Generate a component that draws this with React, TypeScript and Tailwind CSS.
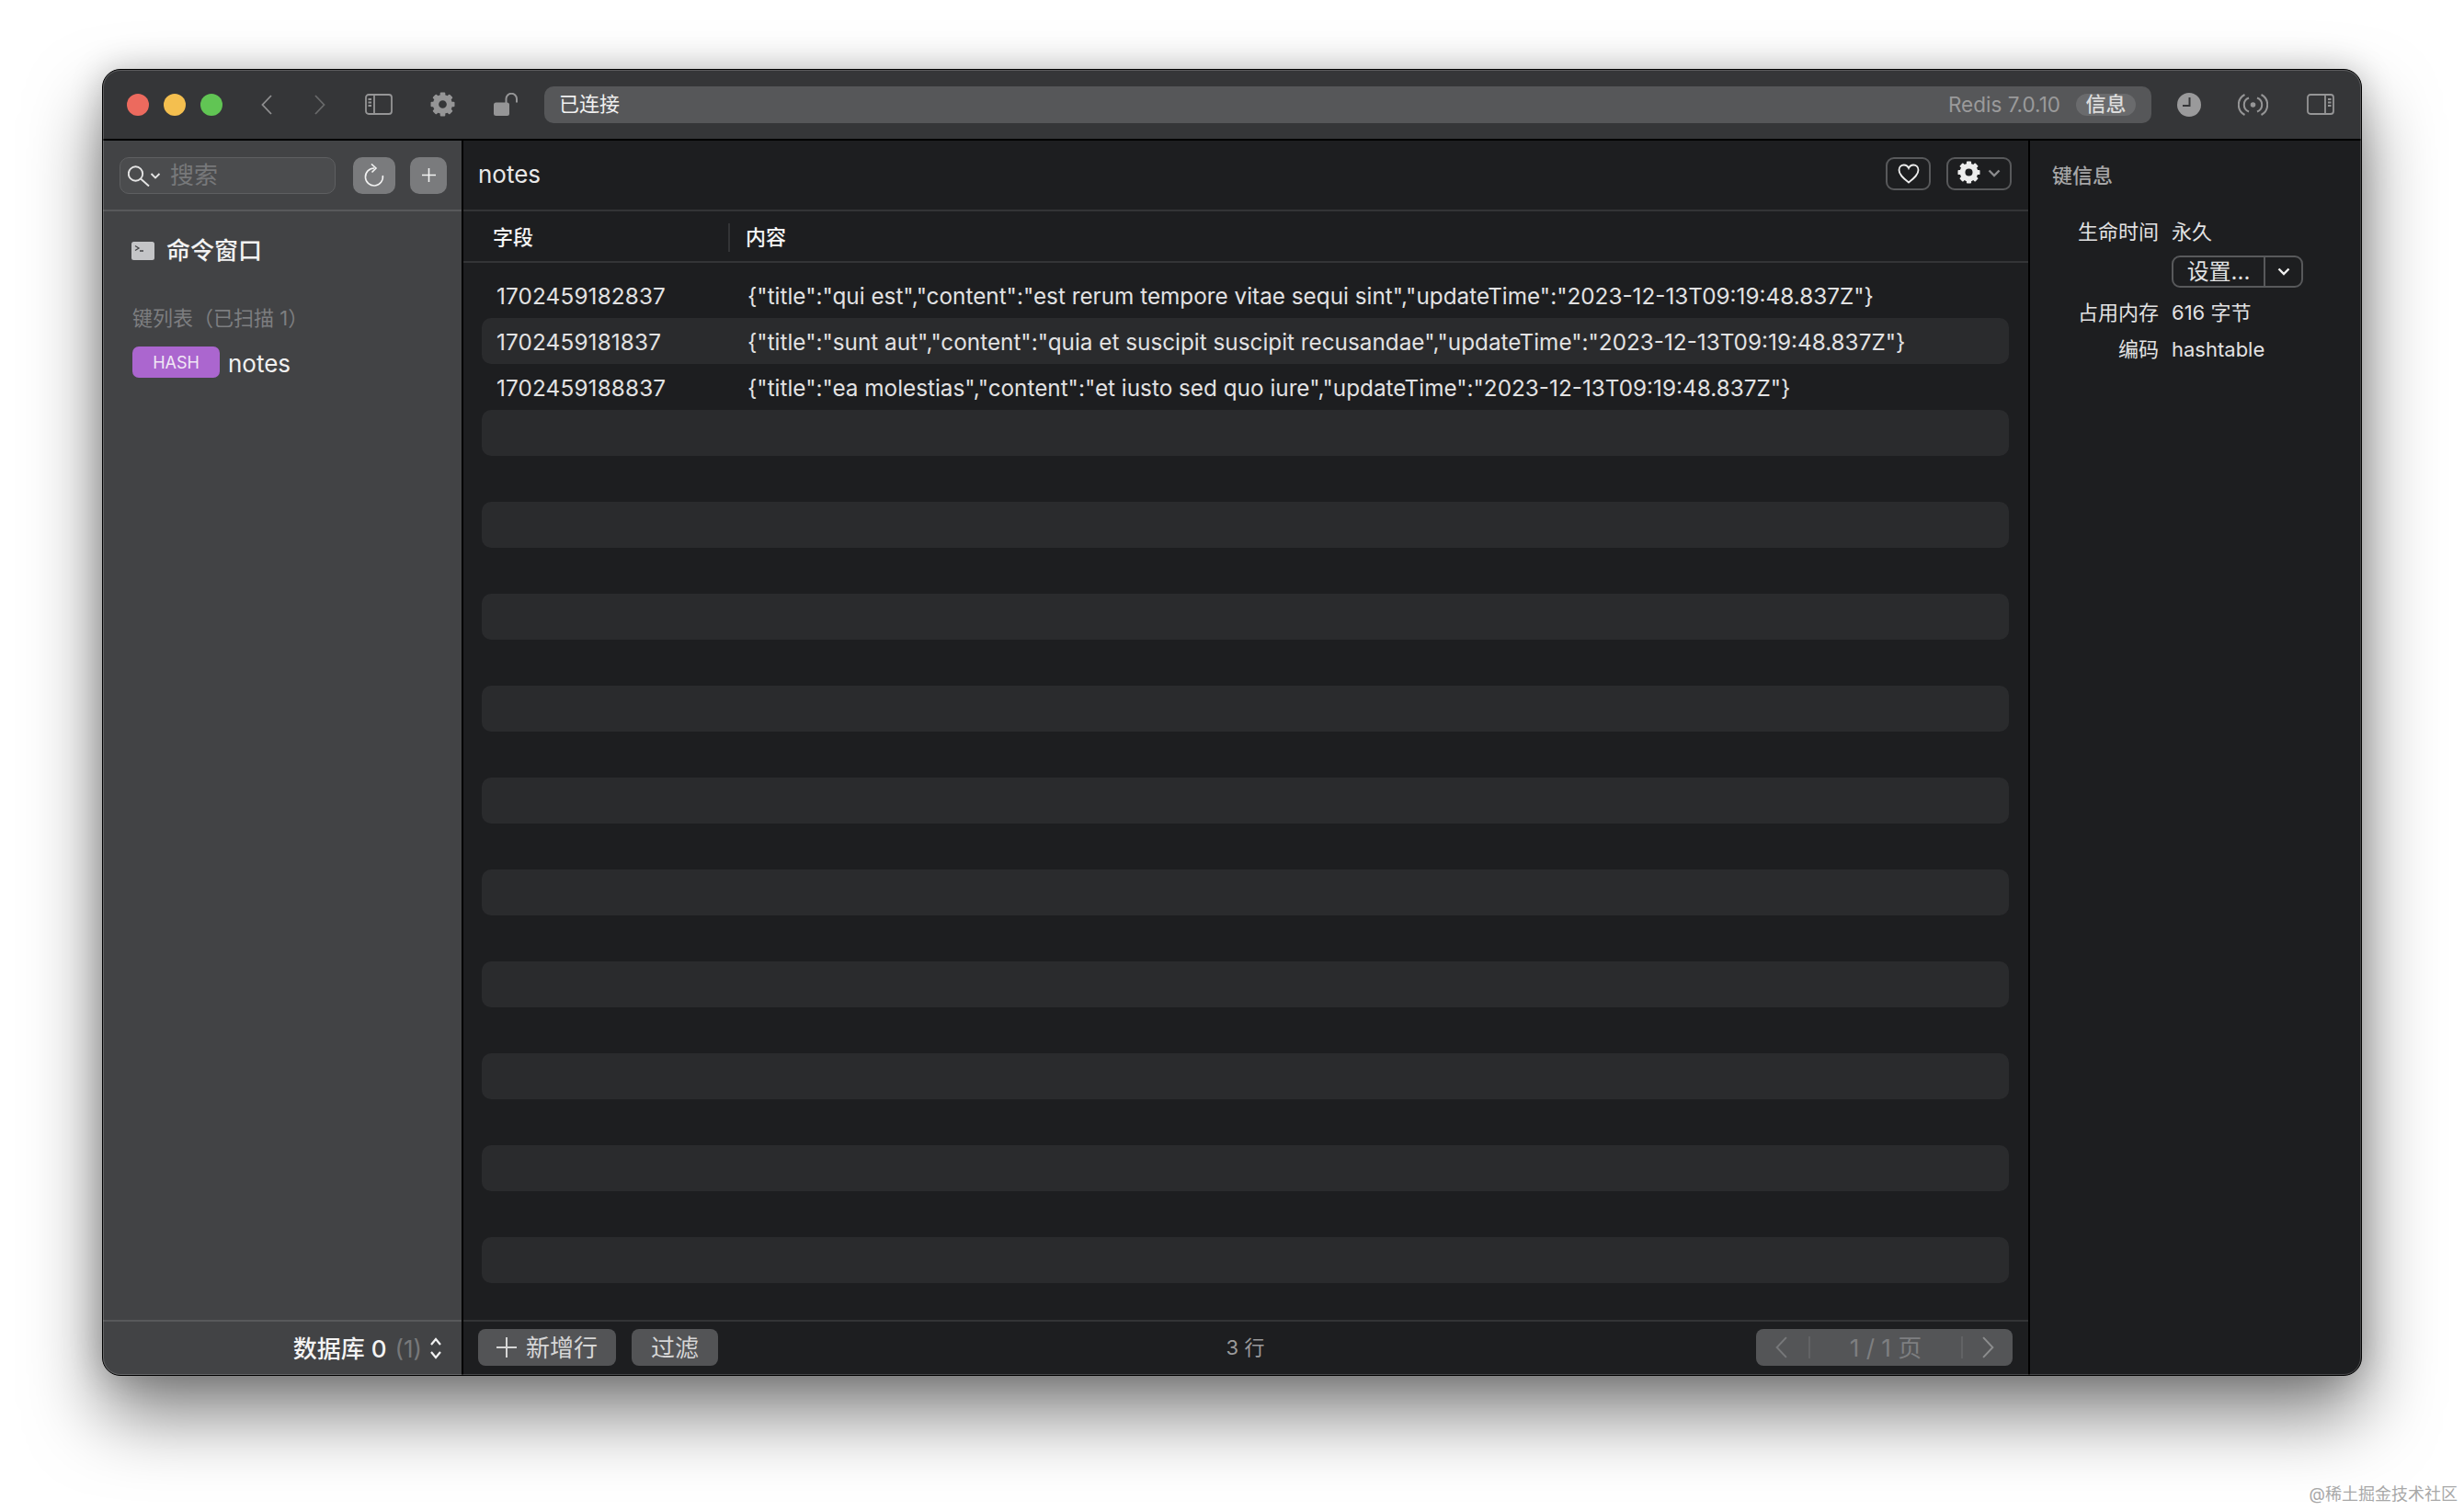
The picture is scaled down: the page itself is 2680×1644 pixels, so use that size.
const rows = [
	{
		field: '1702459182837',
		value: '{"title":"qui est","content":"est rerum tempore vitae sequi sint","updateTime":"2023-12-13T09:19:48.837Z"}'
	},
	{
		field: '1702459181837',
		value: '{"title":"sunt aut","content":"quia et suscipit suscipit recusandae","updateTime":"2023-12-13T09:19:48.837Z"}'
	},
	{
		field: '1702459188837',
		value: '{"title":"ea molestias","content":"et iusto sed quo iure","updateTime":"2023-12-13T09:19:48.837Z"}'
	}
];

const emptyRows = Array.from({ length: 19 }, (_, i) => i);
const gearTeeth = [0, 45, 90, 135, 180, 225, 270, 315];

const Chevron = ({ dir, className }: { dir: 'left' | 'right'; className: string }) => (
	<svg viewBox="0 0 12 22" fill="none" stroke="currentColor" strokeWidth="1.8" className={className}>
		<path d={dir === 'left' ? 'M11 1 L1.5 11 L11 21' : 'M1 1 L10.5 11 L1 21'} />
	</svg>
);

const ChevronDown = ({ className }: { className: string }) => (
	<svg viewBox="0 0 14 9" fill="none" stroke="currentColor" strokeWidth="2.4" className={className}>
		<path d="M1.5 1.5 L7 7 L12.5 1.5" />
	</svg>
);

const PanelIcon = ({ right }: { right?: boolean }) => (
	<svg viewBox="0 0 30 23" fill="none" stroke="currentColor" strokeWidth="1.8" className="w-[30px] h-[23px] flex-none text-[#959596]">
		<rect x="1" y="1" width="28" height="21" rx="3" />
		{right ? (
			<path d="M20 1 V22 M23 6 H26.5 M23 9.5 H26.5 M23 13 H26.5" />
		) : (
			<path d="M10 1 V22 M3.5 6 H7 M3.5 9.5 H7 M3.5 13 H7" />
		)}
	</svg>
);

const Gear = ({ className }: { className: string }) => (
	<svg viewBox="0 0 26 26" className={className}>
		<circle cx="13" cy="13" r="7.2" fill="none" stroke="currentColor" strokeWidth="6" />
		{gearTeeth.map((deg) => (
			<rect key={deg} x="10.3" y="0.5" width="5.4" height="6" rx="1" fill="currentColor" transform={`rotate(${deg} 13 13)`} />
		))}
	</svg>
);

export default function App() {
	return (
		<div className="relative w-[2680px] h-[1644px] overflow-hidden bg-white pl-[111px] pt-[75px] font-['Inter','Noto_Sans_CJK_SC',sans-serif]">
			<div className="relative w-[2458px] h-[1422px] flex flex-col rounded-[20px] border border-black bg-[#1d1e20] shadow-[0_42px_80px_rgba(0,0,0,0.5),0_0_36px_rgba(0,0,0,0.2)]">
				{/* title bar */}
				<div className="h-[77px] flex-none flex items-center pl-[26px] bg-[#353638] border-b-2 border-black rounded-t-[19px]">
					<div className="flex gap-4">
						<div className="w-6 h-6 rounded-full bg-[#ec6a5e]" />
						<div className="w-6 h-6 rounded-full bg-[#f4bf4f]" />
						<div className="w-6 h-6 rounded-full bg-[#61c554]" />
					</div>
					<Chevron dir="left" className="ml-[42px] w-[12px] h-[22px] flex-none text-[#8f8f90]" />
					<Chevron dir="right" className="ml-[46px] w-[12px] h-[22px] flex-none text-[#68696a]" />
					<div className="ml-[43px] flex">
						<PanelIcon />
					</div>
					<Gear className="ml-[41px] w-[27px] h-[27px] flex-none text-[#959596]" />
					<svg viewBox="0 0 26 25" className="ml-[42px] w-[26px] h-[25px] flex-none text-[#959596]">
						<rect x="0" y="10.5" width="17" height="14.5" rx="2.5" fill="currentColor" />
						<path d="M13.5 11 V6.5 A5.5 5.5 0 0 1 25 6.5 V10.5" fill="none" stroke="currentColor" strokeWidth="2" />
					</svg>
					<div className="ml-[29px] w-[1748px] h-10 flex-none flex items-center justify-between rounded-[10px] bg-[#565759] pl-4 pr-[17px]">
						<span className="text-[22px] text-[#f0f0f0]">已连接</span>
						<div className="flex items-center gap-[17px]">
							<span className="text-[22.5px] text-[#9a9a9b]">Redis 7.0.10</span>
							<span className="h-6 w-[65px] flex items-center justify-center rounded-full bg-[#6a6b6d] text-[22px] font-medium text-[#dcdcdc]">
								信息
							</span>
						</div>
					</div>
					<svg viewBox="0 0 26 26" className="ml-[28px] w-[26px] h-[26px] flex-none">
						<circle cx="13" cy="13" r="13" fill="#9a9a9b" />
						<path d="M13.5 5 V14 H6" fill="none" stroke="#353638" strokeWidth="2" />
					</svg>
					<svg viewBox="0 0 33 24" fill="none" stroke="#959596" strokeWidth="2" className="ml-[40px] w-[33px] h-[24px] flex-none">
						<circle cx="16.5" cy="12" r="2.8" fill="#959596" stroke="none" />
						<path d="M12 4.5 A8 8 0 0 0 12 19.5 M21 4.5 A8 8 0 0 1 21 19.5" />
						<path d="M7.5 1 A12.4 12.4 0 0 0 7.5 23 M25.5 1 A12.4 12.4 0 0 1 25.5 23" />
					</svg>
					<div className="ml-[42px] flex">
						<PanelIcon right />
					</div>
				</div>

				<div className="flex flex-1 min-h-0">
					{/* sidebar */}
					<div className="w-[392px] flex-none flex flex-col bg-[#424345] border-r-2 border-black rounded-bl-[19px]">
						<div className="h-[77px] flex-none flex items-center pl-[18px] border-b-2 border-[#58595b]">
							<div className="w-[235px] h-10 flex items-center pl-2 rounded-[10px] border border-[#5e5f61] bg-[#4b4c4e]">
								<svg viewBox="0 0 36 24" fill="none" stroke="#e4e4e4" strokeWidth="1.9" className="w-[36px] h-[24px] flex-none">
									<circle cx="8.5" cy="10" r="7.7" />
									<path d="M14 15.5 L23 23.5" />
									<path d="M25.5 10 L30 14.5 L34.5 10" />
								</svg>
								<span className="ml-[10px] text-[26px] leading-none text-[#77787a]">搜索</span>
							</div>
							<div className="ml-[19px] w-[46px] h-10 flex items-center justify-center rounded-[10px] bg-[#7a7b7d]">
								<svg viewBox="0 0 22 26" fill="none" stroke="#f2f2f2" strokeWidth="1.6" className="w-[22px] h-[26px]">
									<path d="M20.3 13 A9.5 9.5 0 1 1 11 5" />
									<path d="M8 0.5 L13 5 L8.5 9.5" />
								</svg>
							</div>
							<div className="ml-4 w-10 h-10 flex items-center justify-center rounded-[10px] bg-[#7a7b7d]">
								<svg viewBox="0 0 15 15" stroke="#f2f2f2" strokeWidth="1.6" className="w-[15px] h-[15px]">
									<path d="M7.5 0 V15 M0 7.5 H15" />
								</svg>
							</div>
						</div>
						<div className="flex-1 min-h-0 pl-[32px] pt-[23px]">
							<div className="h-10 flex items-center -ml-px">
								<svg viewBox="0 0 25 20" className="w-[25px] h-[20px] flex-none">
									<rect width="25" height="20" rx="2.5" fill="#c4c5c7" />
									<path d="M4 4.5 L8 7 L4 9.5 M9 10 H13" fill="none" stroke="#424345" strokeWidth="1.3" />
								</svg>
								<span className="ml-[13px] text-[26px] leading-none font-medium text-[#f2f2f2]">命令窗口</span>
							</div>
							<div className="mt-[38px] h-[30px] flex items-center text-[22px] text-[#7d7e80]">键列表（已扫描 1）</div>
							<div className="mt-4 h-[34px] flex items-center">
								<span className="w-[95px] h-[34px] flex items-center justify-center rounded-[7px] bg-[#ab66cf] text-[18px] text-[#f0e6f5]">
									HASH
								</span>
								<span className="ml-[9px] pt-[2px] text-[26px] text-[#f0f0f0]">notes</span>
							</div>
						</div>
						<div className="h-[60px] flex-none flex items-center justify-end pr-[21px] border-t-2 border-[#58595b]">
							<span className="text-[26px] font-medium text-[#f4f4f4]">数据库 0</span>
							<span className="ml-[9px] text-[26px] text-[#77787a]">(1)</span>
							<svg viewBox="0 0 14 26" fill="none" stroke="#f2f2f2" strokeWidth="2.2" className="ml-[8px] w-[14px] h-[26px] flex-none">
								<path d="M2 9 L7 3 L12 9 M2 17 L7 23 L12 17" />
							</svg>
						</div>
					</div>

					{/* main */}
					<div className="w-[1704px] flex-none flex flex-col border-r-2 border-black">
						<div className="h-[77px] flex-none flex items-center justify-between pl-4 pr-[18px] border-b-2 border-[#333436]">
							<span className="pb-[2px] text-[26px] text-[#e8e8e8]">notes</span>
							<div className="flex items-center gap-[17px] mb-1">
								<div className="w-[49px] h-9 flex items-center justify-center rounded-[9px] border-2 border-[#58595b]">
									<svg viewBox="0 0 24 22" fill="none" stroke="#ededed" strokeWidth="1.8" className="w-[24px] h-[22px]">
										<path d="M12 20.5 C5 15 1.5 11.5 1.5 7 C1.5 3.5 4 1.5 6.8 1.5 C9 1.5 11 2.8 12 5 C13 2.8 15 1.5 17.2 1.5 C20 1.5 22.5 3.5 22.5 7 C22.5 11.5 19 15 12 20.5 Z" />
									</svg>
								</div>
								<div className="w-[71px] h-9 flex items-center pl-[10px] rounded-[9px] border-2 border-[#58595b]">
									<Gear className="w-[25px] h-[25px] flex-none -mt-[2px] text-[#ededed]" />
									<ChevronDown className="ml-[8px] w-[14px] h-[9px] flex-none text-[#8a8a8c]" />
								</div>
							</div>
						</div>
						<div className="h-[56px] flex-none flex items-center pl-[32px] pt-[2px] border-b-2 border-[#333436] text-[22px] font-medium text-[#f6f6f6]">
							<span className="w-[256px] flex-none">字段</span>
							<div className="w-[2px] h-[31px] flex-none bg-[#333436]" />
							<span className="ml-[17px]">内容</span>
						</div>
						<div className="flex-1 min-h-0 overflow-hidden pt-[10px] pl-[20px] pr-[21px]">
							{rows.map(({ field, value }, i) => (
								<div
									key={field}
									className={`h-[50px] flex items-center pl-4 pt-[2px] rounded-[10px] text-[24.3px] whitespace-nowrap text-[#e2e2e3] ${
										i % 2 === 1 ? 'bg-[#2a2b2d]' : ''
									}`}>
									<span className="w-[273px] flex-none tracking-[0.15px]">{field}</span>
									<span>{value}</span>
								</div>
							))}
							{emptyRows.map((i) => (
								<div key={i} className={`h-[50px] rounded-[10px] ${i % 2 === 0 ? 'bg-[#2a2b2d]' : ''}`} />
							))}
						</div>
						<div className="h-[60px] flex-none grid grid-cols-[1fr_auto_1fr] items-center pl-4 pr-[17px] pb-[2px] border-t-2 border-[#333436]">
							<div className="flex gap-[17px]">
								<div className="w-[150px] h-10 flex items-center justify-center gap-[10px] rounded-[8px] bg-[#535456] text-[26px] text-[#d6d6d6]">
									<svg viewBox="0 0 22 22" stroke="#d6d6d6" strokeWidth="2" className="w-[22px] h-[22px]">
										<path d="M11 0 V22 M0 11 H22" />
									</svg>
									<span>新增行</span>
								</div>
								<div className="w-[94px] h-10 flex items-center justify-center rounded-[8px] bg-[#535456] text-[26px] text-[#d6d6d6]">
									过滤
								</div>
							</div>
							<span className="text-[22px] text-[#9a9a9b]">3 行</span>
							<div className="justify-self-end w-[279px] h-10 flex items-center rounded-[8px] bg-[#545557] text-[#77787a]">
								<div className="w-[54px] flex-none flex justify-center">
									<Chevron dir="left" className="w-[13px] h-[24px]" />
								</div>
								<div className="ml-[3px] w-[2px] h-[24px] flex-none bg-[#626365]" />
								<span className="flex-1 text-center text-[26px] text-[#7e7f81]">1 / 1 页</span>
								<div className="w-[2px] h-[24px] flex-none bg-[#626365]" />
								<div className="w-[54px] flex-none flex justify-center">
									<Chevron dir="right" className="w-[13px] h-[24px] text-[#8c8d8e]" />
								</div>
							</div>
						</div>
					</div>

					{/* key info */}
					<div className="flex-1 min-w-0 rounded-br-[19px]">
						<div className="h-[77px] flex items-center pl-[24px] text-[22px] font-medium text-[#a6a6a7]">键信息</div>
						<div className="grid grid-cols-[140px_auto] gap-x-[14px] items-center pt-[2px] text-[22px] text-[#e2e2e3]">
							<span className="h-10 flex items-center justify-end">生命时间</span>
							<span className="h-10 flex items-center">永久</span>
							<span />
							<div className="mt-[6px] w-[143px] h-[35px] flex items-center rounded-[9px] border-2 border-[#58595b]">
								<span className="w-[98px] flex-none text-center text-[24px] leading-none">设置...</span>
								<div className="w-[2px] h-full flex-none bg-[#58595b]" />
								<div className="flex-1 flex justify-center">
									<ChevronDown className="w-[14px] h-[9px] text-[#f0f0f0]" />
								</div>
							</div>
							<span className="mt-[7px] h-10 flex items-center justify-end">占用内存</span>
							<span className="mt-[7px] h-10 flex items-center">616 字节</span>
							<span className="h-10 flex items-center justify-end">编码</span>
							<span className="h-10 flex items-center">hashtable</span>
						</div>
					</div>
				</div>

				{/* lighter inner edge of the window */}
				<div className="absolute inset-0 rounded-[19px] border border-[#ffffff30] pointer-events-none" />
			</div>
			<span className="absolute right-[7px] bottom-[6px] text-[18px] leading-[24px] text-[#a8a8a8]">@稀土掘金技术社区</span>
		</div>
	);
}
